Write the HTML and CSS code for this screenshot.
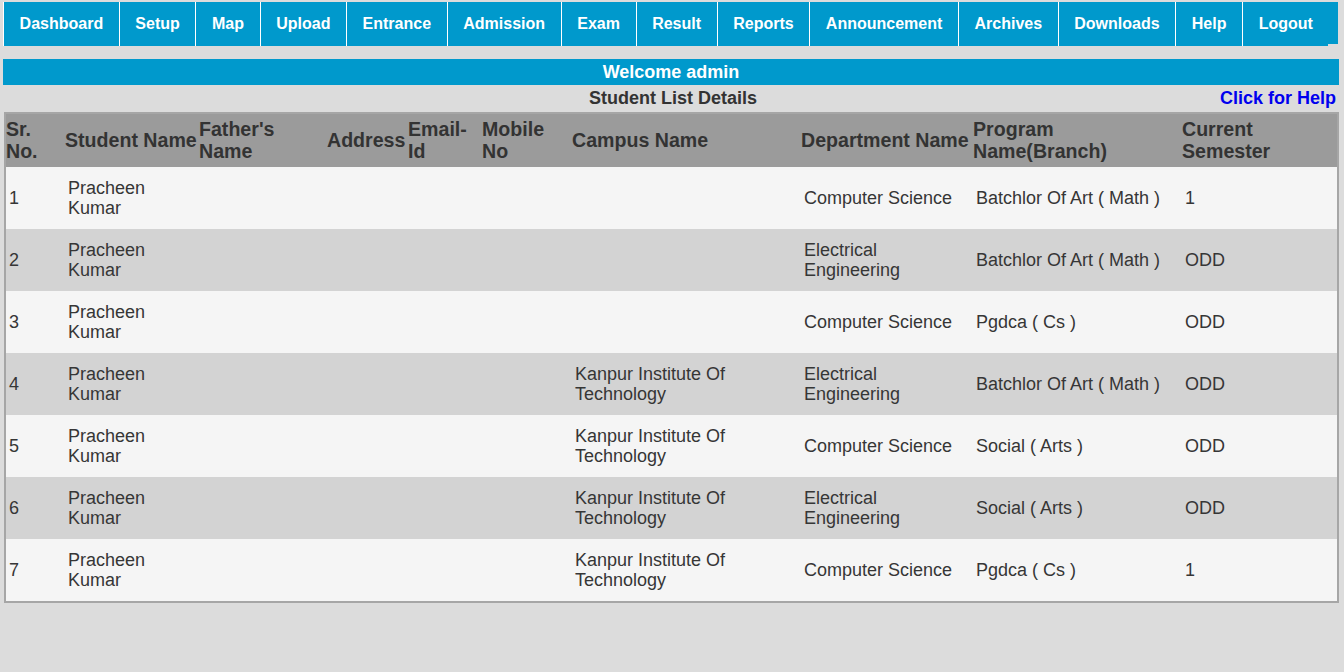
FILE: index.html
```html
<!DOCTYPE html>
<html>
<head>
<meta charset="utf-8">
<title>Student List Details</title>
<link rel="stylesheet" href="styles.css">
</head>
<body>
<nav class="topnav">
  <ul class="menu">
    <li class="menu-item">Dashboard</li>
    <li class="menu-item">Setup</li>
    <li class="menu-item">Map</li>
    <li class="menu-item">Upload</li>
    <li class="menu-item">Entrance</li>
    <li class="menu-item">Admission</li>
    <li class="menu-item">Exam</li>
    <li class="menu-item">Result</li>
    <li class="menu-item">Reports</li>
    <li class="menu-item">Announcement</li>
    <li class="menu-item">Archives</li>
    <li class="menu-item">Downloads</li>
    <li class="menu-item">Help</li>
    <li class="menu-item">Logout</li>
  </ul>
</nav>
<div class="welcome">Welcome admin</div>
<div class="titlebar">
  <span class="title">Student List Details</span>
  <a class="help-link" href="#">Click for Help</a>
</div>
<table class="students">
  <colgroup>
    <col class="c-sr"><col class="c-name"><col class="c-father"><col class="c-addr"><col class="c-email">
    <col class="c-mobile"><col class="c-campus"><col class="c-dept"><col class="c-prog"><col class="c-sem">
  </colgroup>
  <thead>
    <tr>
      <th>Sr. No.</th><th>Student Name</th><th>Father's Name</th><th>Address</th><th>Email-Id</th>
      <th>Mobile No</th><th>Campus Name</th><th>Department Name</th><th>Program Name(Branch)</th><th>Current Semester</th>
    </tr>
  </thead>
  <tbody>
    <tr><td>1</td><td>Pracheen Kumar</td><td></td><td></td><td></td><td></td><td></td><td>Computer Science</td><td>Batchlor Of Art ( Math )</td><td>1</td></tr>
    <tr><td>2</td><td>Pracheen Kumar</td><td></td><td></td><td></td><td></td><td></td><td>Electrical Engineering</td><td>Batchlor Of Art ( Math )</td><td>ODD</td></tr>
    <tr><td>3</td><td>Pracheen Kumar</td><td></td><td></td><td></td><td></td><td></td><td>Computer Science</td><td>Pgdca ( Cs )</td><td>ODD</td></tr>
    <tr><td>4</td><td>Pracheen Kumar</td><td></td><td></td><td></td><td></td><td>Kanpur Institute Of Technology</td><td>Electrical Engineering</td><td>Batchlor Of Art ( Math )</td><td>ODD</td></tr>
    <tr><td>5</td><td>Pracheen Kumar</td><td></td><td></td><td></td><td></td><td>Kanpur Institute Of Technology</td><td>Computer Science</td><td>Social ( Arts )</td><td>ODD</td></tr>
    <tr><td>6</td><td>Pracheen Kumar</td><td></td><td></td><td></td><td></td><td>Kanpur Institute Of Technology</td><td>Electrical Engineering</td><td>Social ( Arts )</td><td>ODD</td></tr>
    <tr><td>7</td><td>Pracheen Kumar</td><td></td><td></td><td></td><td></td><td>Kanpur Institute Of Technology</td><td>Computer Science</td><td>Pgdca ( Cs )</td><td>1</td></tr>
  </tbody>
</table>
</body>
</html>
```
FILE: styles.css
```css
html, body {
  background: #dcdcdc;
}
body {
  margin: 0;
  padding: 2px 5px 0 3px;
  font-family: "Liberation Sans", Arial, sans-serif;
}
.topnav {
  height: 44px;
}
.menu {
  list-style: none;
  margin: 0;
  padding: 0;
  display: flex;
  width: 1335px;
  height: 42px;
  background: #0099cc;
}
.menu-item {
  height: 44px;
  padding: 0 15.6px;
  border-left: 1px solid #ffffff;
  background: #0099cc;
  color: #ffffff;
  font-weight: bold;
  font-size: 16px;
  line-height: 44px;
  white-space: nowrap;
}
.welcome {
  margin-top: 13px;
  height: 26px;
  line-height: 26px;
  background: #0099cc;
  color: #ffffff;
  font-weight: bold;
  font-size: 18px;
  text-align: center;
}
.titlebar {
  position: relative;
  height: 27px;
  line-height: 27px;
  padding-left: 4px;
  text-align: center;
}
.title {
  font-weight: bold;
  font-size: 18px;
  color: #333333;
}
.help-link {
  position: absolute;
  right: 3px;
  top: 0;
  font-weight: bold;
  font-size: 18px;
  color: #0000ee;
  text-decoration: none;
}
.students {
  margin-left: 1px;
  width: 1335px;
  border: 2px solid #a6a6a6;
  border-collapse: separate;
  border-spacing: 0;
  table-layout: fixed;
}
.c-sr { width: 59px; }
.c-name { width: 134px; }
.c-father { width: 128px; }
.c-addr { width: 81px; }
.c-email { width: 74px; }
.c-mobile { width: 90px; }
.c-campus { width: 229px; }
.c-dept { width: 172px; }
.c-prog { width: 209px; }
.c-sem { width: 155px; }
.students th {
  background: #9b9b9b;
  color: #333333;
  font-size: 19.6px;
  font-weight: bold;
  line-height: 22px;
  text-align: left;
  padding: 4px 0 5px 0;
  vertical-align: middle;
}
.students td {
  font-size: 18px;
  line-height: 20px;
  color: #363636;
  padding: 11px 3px;
  height: 40px;
  vertical-align: middle;
}
.students tbody tr:nth-child(odd) td {
  background: #f5f5f5;
}
.students tbody tr:nth-child(even) td {
  background: #d3d3d3;
}
```
